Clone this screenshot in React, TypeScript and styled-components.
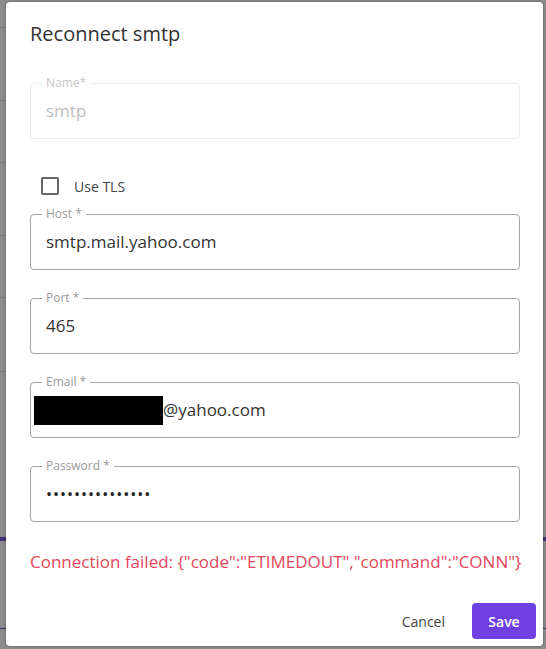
import React from 'react';
import styled, { createGlobalStyle } from 'styled-components';

const GlobalStyle = createGlobalStyle`
  html, body {
    margin: 0;
    padding: 0;
  }
  body {
    font-family: "Open Sans", "Liberation Sans", sans-serif;
    background-color: #8b8b8b;
    background-image:
      linear-gradient(to bottom, transparent 27px, #7b7b7b 27px, #7b7b7b 28px, transparent 28px),
      linear-gradient(to bottom, transparent 100px, #7b7b7b 100px, #7b7b7b 101px, transparent 101px),
      linear-gradient(to bottom, transparent 162px, #7b7b7b 162px, #7b7b7b 163px, transparent 163px),
      linear-gradient(to bottom, transparent 235px, #7b7b7b 235px, #7b7b7b 236px, transparent 236px),
      linear-gradient(to bottom, transparent 297px, #7b7b7b 297px, #7b7b7b 298px, transparent 298px),
      linear-gradient(to bottom, transparent 371px, #7b7b7b 371px, #7b7b7b 372px, transparent 372px),
      linear-gradient(to bottom, transparent 537px, #43307a 537px, #43307a 541px, transparent 541px),
      linear-gradient(to bottom, transparent 628px, #43307a 628px, #43307a 629px, transparent 629px);
    background-repeat: no-repeat;
    min-height: 649px;
  }
`;

const Dialog = styled.div`
  box-sizing: border-box;
  margin: 2px 0 0 6px;
  width: 537px;
  height: 644px;
  background: #fff;
  border-radius: 4px;
  box-shadow: 0 0 3px rgba(0, 0, 0, 0.35);
  display: flex;
  flex-direction: column;
`;

const Title = styled.h2`
  margin: 0;
  padding: 16px 24px 0;
  font-size: 20px;
  line-height: 32px;
  font-weight: 400;
  color: #333;
`;

const Body = styled.div`
  padding: 0 23px 0 24px;
  display: flex;
  flex-direction: column;
`;

const Field = styled.div<{ $disabled?: boolean; $gap: number }>`
  position: relative;
  box-sizing: border-box;
  height: 56px;
  margin-top: ${(p) => p.$gap}px;
  border: 1px solid ${(p) => (p.$disabled ? '#ececec' : '#a6a6a6')};
  border-radius: 4px;
  padding: 0 15px;
  display: flex;
  align-items: center;
  font-size: 17px;
  line-height: 24px;
  color: ${(p) => (p.$disabled ? '#bdbdbd' : '#333')};
`;

const Label = styled.span<{ $disabled?: boolean }>`
  position: absolute;
  top: -9px;
  left: 11px;
  padding: 0 4px;
  background: #fff;
  font-size: 12px;
  line-height: 16px;
  color: ${(p) => (p.$disabled ? '#c6c6c6' : '#9a9a9a')};
`;

const Redacted = styled.span`
  display: inline-block;
  width: 129px;
  height: 29px;
  margin-left: -12px;
  background: #000;
`;

const Dots = styled.span`
  font-size: 16px;
  letter-spacing: 1px;
  color: #222;
`;

const CheckRow = styled.label`
  margin-top: 35px;
  height: 24px;
  padding-left: 11px;
  display: flex;
  align-items: center;
  font-size: 14px;
  color: #444;
`;

const Box = styled.span`
  box-sizing: border-box;
  width: 18px;
  height: 18px;
  border: 2px solid #666;
  border-radius: 2px;
  margin-right: 15px;
`;

const ErrorText = styled.p`
  margin: 28px 0 0;
  font-size: 17px;
  line-height: 24px;
  color: #e4475c;
  white-space: nowrap;
`;

const Actions = styled.div`
  margin-top: auto;
  padding: 0 7px 7px 0;
  display: flex;
  justify-content: flex-end;
  align-items: center;
`;

const Button = styled.button<{ $primary?: boolean }>`
  font-family: inherit;
  font-size: 14px;
  height: 36px;
  border: none;
  border-radius: 4px;
  cursor: pointer;
  padding: ${(p) => (p.$primary ? '0 16px' : '0 8px')};
  margin-left: ${(p) => (p.$primary ? '19px' : '0')};
  font-weight: ${(p) => (p.$primary ? 600 : 400)};
  color: ${(p) => (p.$primary ? '#fff' : '#444')};
  background: ${(p) => (p.$primary ? '#6e40e2' : 'transparent')};
  min-width: ${(p) => (p.$primary ? '64px' : '0')};
`;

export default function App() {
  return (
    <>
      <GlobalStyle />
      <Dialog>
        <Title>Reconnect smtp</Title>
        <Body>
          <Field $disabled $gap={33}>
            <Label $disabled>Name*</Label>
            smtp
          </Field>
          <CheckRow>
            <Box />
            Use TLS
          </CheckRow>
          <Field $gap={16}>
            <Label>Host *</Label>
            smtp.mail.yahoo.com
          </Field>
          <Field $gap={28}>
            <Label>Port *</Label>
            465
          </Field>
          <Field $gap={28}>
            <Label>Email *</Label>
            <Redacted />
            @yahoo.com
          </Field>
          <Field $gap={28}>
            <Label>Password *</Label>
            <Dots>•••••••••••••••</Dots>
          </Field>
          <ErrorText>
            Connection failed: {'{"code":"ETIMEDOUT","command":"CONN"}'}
          </ErrorText>
        </Body>
        <Actions>
          <Button>Cancel</Button>
          <Button $primary>Save</Button>
        </Actions>
      </Dialog>
    </>
  );
}
